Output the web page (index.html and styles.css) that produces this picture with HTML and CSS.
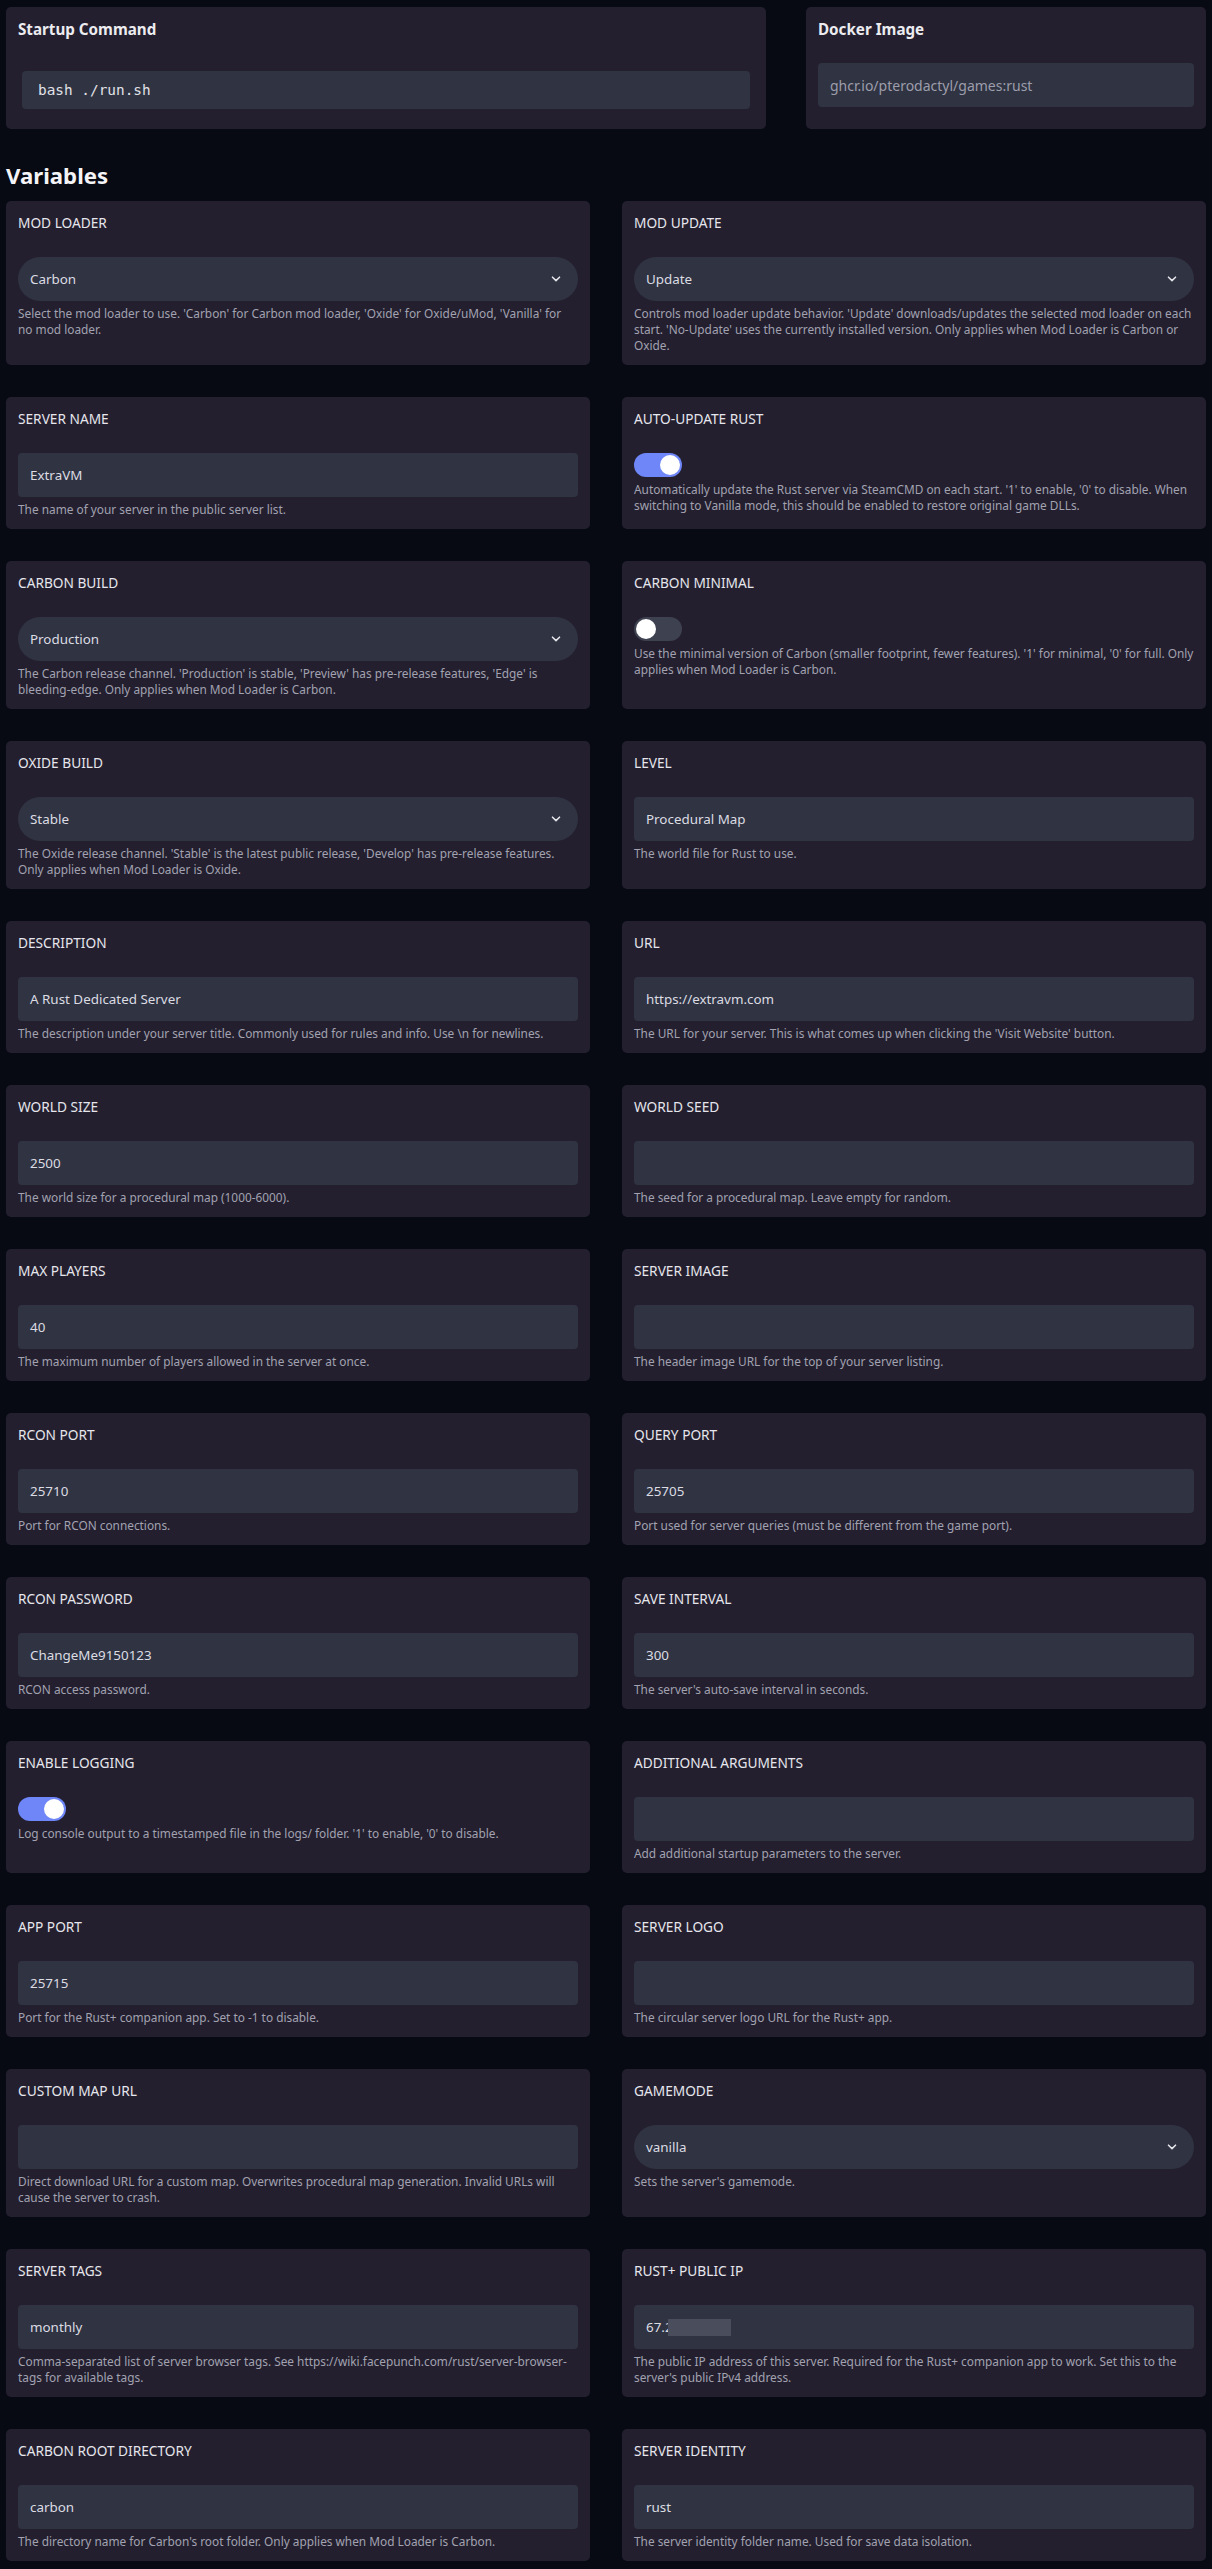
FILE: index.html
```html
<!DOCTYPE html>
<html lang="en">
<head>
<meta charset="utf-8">
<title>Startup</title>
<link rel="stylesheet" href="styles.css">
</head>
<body>
<div class="page">
  <div class="top">
    <section class="panel">
      <h2 class="panel-title">Startup Command</h2>
      <div class="code">bash ./run.sh</div>
    </section>
    <section class="panel">
      <h2 class="panel-title">Docker Image</h2>
      <div class="docker">ghcr.io/pterodactyl/games:rust</div>
    </section>
  </div>

  <h1 class="heading">Variables</h1>

  <div class="grid">
    <div class="card">
      <div class="label">MOD LOADER</div>
      <div class="select">Carbon<svg class="chev" viewBox="0 0 10 6" width="10" height="6"><path d="M1.5 1.2 5 4.6 8.5 1.2" fill="none" stroke="#e4e4ea" stroke-width="1.6" stroke-linecap="round" stroke-linejoin="round"/></svg></div>
      <p class="desc">Select the mod loader to use. 'Carbon' for Carbon mod loader, 'Oxide' for Oxide/uMod, 'Vanilla' for no mod loader.</p>
    </div>
    <div class="card">
      <div class="label">MOD UPDATE</div>
      <div class="select">Update<svg class="chev" viewBox="0 0 10 6" width="10" height="6"><path d="M1.5 1.2 5 4.6 8.5 1.2" fill="none" stroke="#e4e4ea" stroke-width="1.6" stroke-linecap="round" stroke-linejoin="round"/></svg></div>
      <p class="desc">Controls mod loader update behavior. 'Update' downloads/updates the selected mod loader on each start. 'No-Update' uses the currently installed version. Only applies when Mod Loader is Carbon or Oxide.</p>
    </div>

    <div class="card">
      <div class="label">SERVER NAME</div>
      <div class="input">ExtraVM</div>
      <p class="desc">The name of your server in the public server list.</p>
    </div>
    <div class="card">
      <div class="label">AUTO-UPDATE RUST</div>
      <div class="toggle on"><span class="knob"></span></div>
      <p class="desc">Automatically update the Rust server via SteamCMD on each start. '1' to enable, '0' to disable. When switching to Vanilla mode, this should be enabled to restore original game DLLs.</p>
    </div>

    <div class="card">
      <div class="label">CARBON BUILD</div>
      <div class="select">Production<svg class="chev" viewBox="0 0 10 6" width="10" height="6"><path d="M1.5 1.2 5 4.6 8.5 1.2" fill="none" stroke="#e4e4ea" stroke-width="1.6" stroke-linecap="round" stroke-linejoin="round"/></svg></div>
      <p class="desc">The Carbon release channel. 'Production' is stable, 'Preview' has pre-release features, 'Edge' is bleeding-edge. Only applies when Mod Loader is Carbon.</p>
    </div>
    <div class="card">
      <div class="label">CARBON MINIMAL</div>
      <div class="toggle"><span class="knob"></span></div>
      <p class="desc">Use the minimal version of Carbon (smaller footprint, fewer features). '1' for minimal, '0' for full. Only applies when Mod Loader is Carbon.</p>
    </div>

    <div class="card">
      <div class="label">OXIDE BUILD</div>
      <div class="select">Stable<svg class="chev" viewBox="0 0 10 6" width="10" height="6"><path d="M1.5 1.2 5 4.6 8.5 1.2" fill="none" stroke="#e4e4ea" stroke-width="1.6" stroke-linecap="round" stroke-linejoin="round"/></svg></div>
      <p class="desc">The Oxide release channel. 'Stable' is the latest public release, 'Develop' has pre-release features. Only applies when Mod Loader is Oxide.</p>
    </div>
    <div class="card">
      <div class="label">LEVEL</div>
      <div class="input">Procedural Map</div>
      <p class="desc">The world file for Rust to use.</p>
    </div>

    <div class="card">
      <div class="label">DESCRIPTION</div>
      <div class="input">A Rust Dedicated Server</div>
      <p class="desc">The description under your server title. Commonly used for rules and info. Use \n for newlines.</p>
    </div>
    <div class="card">
      <div class="label">URL</div>
      <div class="input">https://extravm.com</div>
      <p class="desc">The URL for your server. This is what comes up when clicking the 'Visit Website' button.</p>
    </div>

    <div class="card">
      <div class="label">WORLD SIZE</div>
      <div class="input">2500</div>
      <p class="desc">The world size for a procedural map (1000-6000).</p>
    </div>
    <div class="card">
      <div class="label">WORLD SEED</div>
      <div class="input"></div>
      <p class="desc">The seed for a procedural map. Leave empty for random.</p>
    </div>

    <div class="card">
      <div class="label">MAX PLAYERS</div>
      <div class="input">40</div>
      <p class="desc">The maximum number of players allowed in the server at once.</p>
    </div>
    <div class="card">
      <div class="label">SERVER IMAGE</div>
      <div class="input"></div>
      <p class="desc">The header image URL for the top of your server listing.</p>
    </div>

    <div class="card">
      <div class="label">RCON PORT</div>
      <div class="input">25710</div>
      <p class="desc">Port for RCON connections.</p>
    </div>
    <div class="card">
      <div class="label">QUERY PORT</div>
      <div class="input">25705</div>
      <p class="desc">Port used for server queries (must be different from the game port).</p>
    </div>

    <div class="card">
      <div class="label">RCON PASSWORD</div>
      <div class="input">ChangeMe9150123</div>
      <p class="desc">RCON access password.</p>
    </div>
    <div class="card">
      <div class="label">SAVE INTERVAL</div>
      <div class="input">300</div>
      <p class="desc">The server's auto-save interval in seconds.</p>
    </div>

    <div class="card">
      <div class="label">ENABLE LOGGING</div>
      <div class="toggle on"><span class="knob"></span></div>
      <p class="desc">Log console output to a timestamped file in the logs/ folder. '1' to enable, '0' to disable.</p>
    </div>
    <div class="card">
      <div class="label">ADDITIONAL ARGUMENTS</div>
      <div class="input"></div>
      <p class="desc">Add additional startup parameters to the server.</p>
    </div>

    <div class="card">
      <div class="label">APP PORT</div>
      <div class="input">25715</div>
      <p class="desc">Port for the Rust+ companion app. Set to -1 to disable.</p>
    </div>
    <div class="card">
      <div class="label">SERVER LOGO</div>
      <div class="input"></div>
      <p class="desc">The circular server logo URL for the Rust+ app.</p>
    </div>

    <div class="card">
      <div class="label">CUSTOM MAP URL</div>
      <div class="input"></div>
      <p class="desc">Direct download URL for a custom map. Overwrites procedural map generation. Invalid URLs will cause the server to crash.</p>
    </div>
    <div class="card">
      <div class="label">GAMEMODE</div>
      <div class="select">vanilla<svg class="chev" viewBox="0 0 10 6" width="10" height="6"><path d="M1.5 1.2 5 4.6 8.5 1.2" fill="none" stroke="#e4e4ea" stroke-width="1.6" stroke-linecap="round" stroke-linejoin="round"/></svg></div>
      <p class="desc">Sets the server's gamemode.</p>
    </div>

    <div class="card">
      <div class="label">SERVER TAGS</div>
      <div class="input">monthly</div>
      <p class="desc">Comma-separated list of server browser tags. See https://wiki.facepunch.com/rust/server-browser-tags for available tags.</p>
    </div>
    <div class="card">
      <div class="label">RUST+ PUBLIC IP</div>
      <div class="input">67.2<span class="redact"></span></div>
      <p class="desc">The public IP address of this server. Required for the Rust+ companion app to work. Set this to the server's public IPv4 address.</p>
    </div>

    <div class="card">
      <div class="label">CARBON ROOT DIRECTORY</div>
      <div class="input">carbon</div>
      <p class="desc">The directory name for Carbon's root folder. Only applies when Mod Loader is Carbon.</p>
    </div>
    <div class="card">
      <div class="label">SERVER IDENTITY</div>
      <div class="input">rust</div>
      <p class="desc">The server identity folder name. Used for save data isolation.</p>
    </div>
  </div>
</div>
</body>
</html>
```

FILE: styles.css
```css
* { box-sizing: border-box; }

html, body {
  margin: 0;
  padding: 0;
  background: #070913;
}

body {
  font-family: "Noto Sans", "Open Sans", sans-serif;
  color: #e6e6ec;
}

.page {
  padding: 7px 6px 8px;
}

.top {
  display: grid;
  grid-template-columns: 1fr 400px;
  column-gap: 40px;
}

.panel {
  background: #231f2f;
  border-radius: 5px;
  padding: 10px 12px 20px;
}

.panel-title {
  margin: 0;
  font-size: 15.2px;
  line-height: 24px;
  font-weight: 700;
  color: #ececf0;
}

.code {
  margin: 30px 4px 0;
  height: 38px;
  background: #2f3342;
  border-radius: 4px;
  padding: 0 16px;
  display: flex;
  align-items: center;
  font-family: "DejaVu Sans Mono", "Liberation Mono", monospace;
  font-size: 14.4px;
  color: #e2e2e8;
}

.docker {
  margin-top: 22px;
  height: 44px;
  background: #2f3342;
  border-radius: 4px;
  padding: 0 12px;
  display: flex;
  align-items: center;
  font-size: 14px;
  color: #9d9dab;
}

.heading {
  margin: 31px 0 9px;
  font-size: 22.2px;
  line-height: 32px;
  font-weight: 700;
  color: #f4f4f7;
}

.grid {
  display: grid;
  grid-template-columns: 1fr 1fr;
  gap: 32px;
}

.card {
  background: #231f2f;
  border-radius: 5px;
  padding: 12px 12px 12px;
}

.label {
  font-size: 13.7px;
  line-height: 20px;
  color: #e6e6ec;
}

.input,
.select {
  margin-top: 24px;
  height: 44px;
  background: #2f3342;
  border-radius: 4px;
  padding: 0 12px;
  display: flex;
  align-items: center;
  font-size: 13.4px;
  color: #dcdce2;
}

.select {
  border-radius: 22px;
  justify-content: space-between;
  padding-right: 17px;
}

.chev {
  display: block;
}

.redact {
  display: inline-block;
  width: 63px;
  height: 17px;
  margin-left: -5px;
  background: #4a4d5b;
}

.toggle {
  margin-top: 24px;
  width: 48px;
  height: 24px;
  border-radius: 12px;
  background: #3e4150;
  padding: 2px;
  display: flex;
  justify-content: flex-start;
}

.toggle.on {
  background: #6e86f7;
  justify-content: flex-end;
}

.knob {
  width: 20px;
  height: 20px;
  border-radius: 50%;
  background: #ffffff;
}

.desc {
  margin: 4px 0 0;
  font-size: 11.855px;
  line-height: 16px;
  color: #a2a2b0;
}
```
